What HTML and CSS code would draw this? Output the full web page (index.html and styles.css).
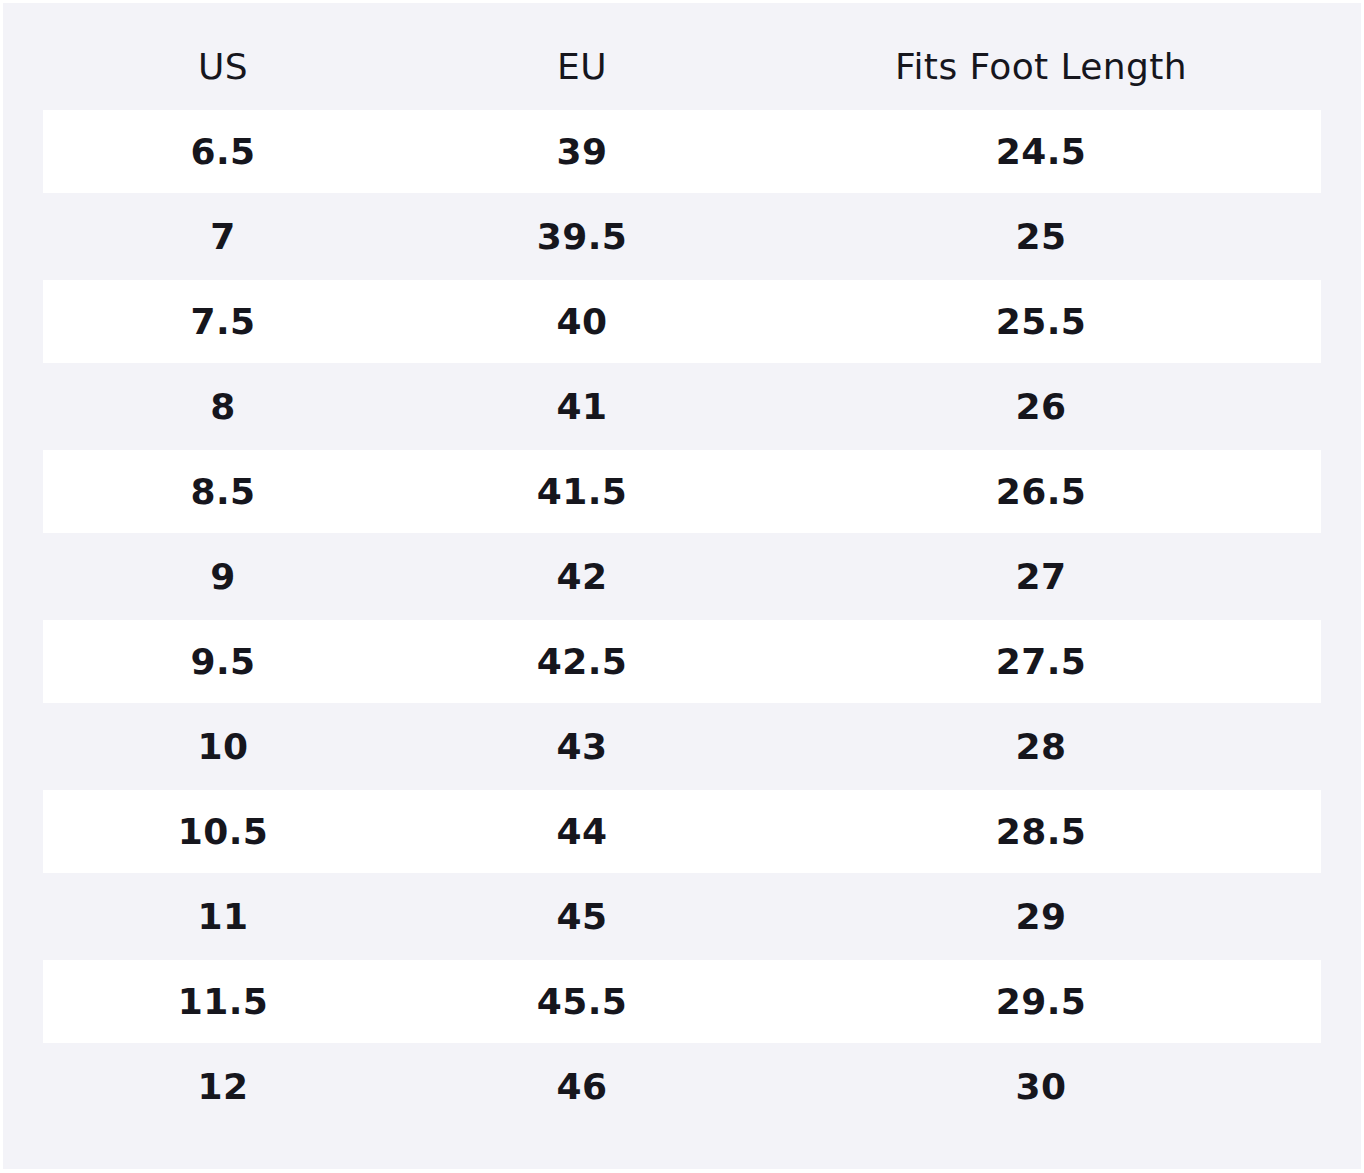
FILE: index.html
```html
<!DOCTYPE html>
<html>
<head>
<meta charset="utf-8">
<link rel="stylesheet" href="styles.css">
</head>
<body>
<div class="panel">
  <div class="row head"><div>US</div><div>EU</div><div>Fits Foot Length</div></div>
  <div class="row odd"><div>6.5</div><div>39</div><div>24.5</div></div>
  <div class="row even"><div>7</div><div>39.5</div><div>25</div></div>
  <div class="row odd"><div>7.5</div><div>40</div><div>25.5</div></div>
  <div class="row even"><div>8</div><div>41</div><div>26</div></div>
  <div class="row odd"><div>8.5</div><div>41.5</div><div>26.5</div></div>
  <div class="row even"><div>9</div><div>42</div><div>27</div></div>
  <div class="row odd"><div>9.5</div><div>42.5</div><div>27.5</div></div>
  <div class="row even"><div>10</div><div>43</div><div>28</div></div>
  <div class="row odd"><div>10.5</div><div>44</div><div>28.5</div></div>
  <div class="row even"><div>11</div><div>45</div><div>29</div></div>
  <div class="row odd"><div>11.5</div><div>45.5</div><div>29.5</div></div>
  <div class="row even"><div>12</div><div>46</div><div>30</div></div>
</div>
</body>
</html>
```
FILE: styles.css
```css
html, body {
  margin: 0;
  padding: 0;
  background: #ffffff;
}
body {
  padding: 3px;
  font-family: "DejaVu Sans", sans-serif;
  color: #16161d;
}
.panel {
  width: 1358px;
  height: 1166px;
  box-sizing: border-box;
  background: #f3f3f8;
  padding: 20px 40px 0 40px;
}
.row {
  display: grid;
  grid-template-columns: 360px 358px 560px;
  align-items: center;
  text-align: center;
  font-size: 36px;
  font-weight: 700;
  letter-spacing: 0.4px;
}
.row > div {
  line-height: 1;
}
.head {
  height: 87px;
  font-weight: 400;
}
.odd {
  height: 83px;
  background: #ffffff;
}
.even {
  height: 87px;
}
```
